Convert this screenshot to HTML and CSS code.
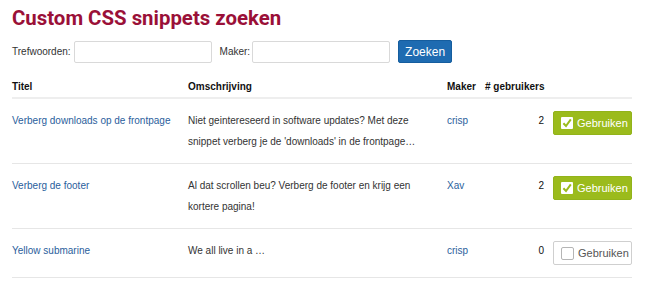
FILE: index.html
```html
<!DOCTYPE html>
<html lang="nl">
<head>
<meta charset="utf-8">
<title>Custom CSS snippets zoeken</title>
<link rel="stylesheet" href="styles.css">
</head>
<body>
<main class="page">
  <h1 class="title">Custom CSS snippets zoeken</h1>
  <form class="search">
    <label class="label" for="q">Trefwoorden:</label>
    <input class="field" id="q" type="text">
    <label class="label label-maker" for="m">Maker:</label>
    <input class="field" id="m" type="text">
    <button class="btn-search" type="button">Zoeken</button>
  </form>
  <table class="snippets">
    <colgroup>
      <col class="c-title"><col class="c-desc"><col class="c-maker"><col class="c-count"><col class="c-use">
    </colgroup>
    <thead>
      <tr><th>Titel</th><th>Omschrijving</th><th>Maker</th><th>#&nbsp;gebruikers</th><th></th></tr>
    </thead>
    <tbody>
      <tr>
        <td><a class="link" href="#">Verberg downloads op de frontpage</a></td>
        <td class="desc">Niet geintereseerd in software updates? Met deze snippet verberg je de 'downloads' in de frontpage…</td>
        <td><a class="link" href="#">crisp</a></td>
        <td class="count">2</td>
        <td class="use-cell"><button class="use use-on" type="button"><span class="box"><svg viewBox="0 0 12 12" width="12" height="12"><rect x="0" y="0" width="12" height="12" rx="1" fill="#fff"/><path d="M2.4 6.2 L5 9 L9.8 2.4" fill="none" stroke="#9bbb1c" stroke-width="2"/></svg></span>Gebruiken</button></td>
      </tr>
      <tr>
        <td><a class="link" href="#">Verberg de footer</a></td>
        <td class="desc">Al dat scrollen beu? Verberg de footer en krijg een kortere pagina!</td>
        <td><a class="link" href="#">Xav</a></td>
        <td class="count">2</td>
        <td class="use-cell"><button class="use use-on" type="button"><span class="box"><svg viewBox="0 0 12 12" width="12" height="12"><rect x="0" y="0" width="12" height="12" rx="1" fill="#fff"/><path d="M2.4 6.2 L5 9 L9.8 2.4" fill="none" stroke="#9bbb1c" stroke-width="2"/></svg></span>Gebruiken</button></td>
      </tr>
      <tr>
        <td><a class="link" href="#">Yellow submarine</a></td>
        <td class="desc">We all live in a …</td>
        <td><a class="link" href="#">crisp</a></td>
        <td class="count">0</td>
        <td class="use-cell"><button class="use use-off" type="button"><span class="box box-off"></span>Gebruiken</button></td>
      </tr>
    </tbody>
  </table>
</main>
</body>
</html>
```

FILE: styles.css
```css
* { box-sizing: border-box; }
body {
  margin: 0;
  background: #fff;
  color: #333;
  font-family: "Liberation Sans", Arial, sans-serif;
  font-size: 10px;
}
.page { padding: 0 24px 0 12px; }
.title {
  margin: 0;
  padding-top: 5px;
  height: 33px;
  font-family: "Roboto", "Noto Sans", sans-serif;
  font-weight: 700;
  font-size: 20.4px;
  line-height: 26px;
  color: #9a1038;
}
.search {
  display: flex;
  align-items: center;
  margin-top: 7px;
  height: 23px;
}
.label { font-size: 10px; color: #333; margin-right: 3px; }
.label-maker { margin-left: 8px; margin-right: 2px; }
.field {
  width: 138px;
  height: 22px;
  border: 1px solid #d9d9d9;
  border-radius: 2px;
  padding: 0 4px;
  font: inherit;
}
.btn-search {
  margin-left: 8px;
  width: 54px;
  height: 23px;
  border: 1px solid #155d9e;
  border-radius: 2px;
  background: #1e6bb1;
  color: #fff;
  font-family: "Liberation Sans", Arial, sans-serif;
  font-size: 12px;
  padding: 0;
}
.snippets {
  margin-top: 17px;
  width: 620px;
  border-collapse: collapse;
  table-layout: fixed;
}
.c-title { width: 176px; }
.c-desc { width: 259px; }
.c-maker { width: 38px; }
.c-count { width: 64px; }
.c-use { width: 83px; }
th {
  text-align: left;
  font-weight: 700;
  font-size: 10px;
  color: #111;
  padding: 0 0 3px 0;
  line-height: 14px;
  border-bottom: 2px solid #eee;
  white-space: nowrap;
}
td {
  vertical-align: top;
  padding: 11px 0 11px 0;
  line-height: 21px;
  border-bottom: 1px solid #e6e6e6;
}
.desc { padding-right: 24px; }
.link { color: #2a5e9c; text-decoration: none; }
.count { text-align: right; padding-right: 5px; color: #111; }
.use-cell { padding-left: 4px; padding-top: 12px; padding-bottom: 12px; }
.use {
  display: flex;
  align-items: center;
  width: 79px;
  height: 24px;
  border-radius: 2px;
  padding: 0 0 0 7px;
  font-family: "Liberation Sans", Arial, sans-serif;
  font-size: 11px;
  white-space: nowrap;
}
.use-on { background: #9bbb1c; border: 1px solid #92b31a; color: #fff; }
.use-off { background: #fff; border: 1px solid #cfcfcf; color: #555; }
.box { display: inline-flex; width: 12px; height: 12px; margin-right: 4px; }
.box-off { width: 13px; height: 13px; border: 1px solid #b5b5b5; border-radius: 2px; background: #fff; }
```
